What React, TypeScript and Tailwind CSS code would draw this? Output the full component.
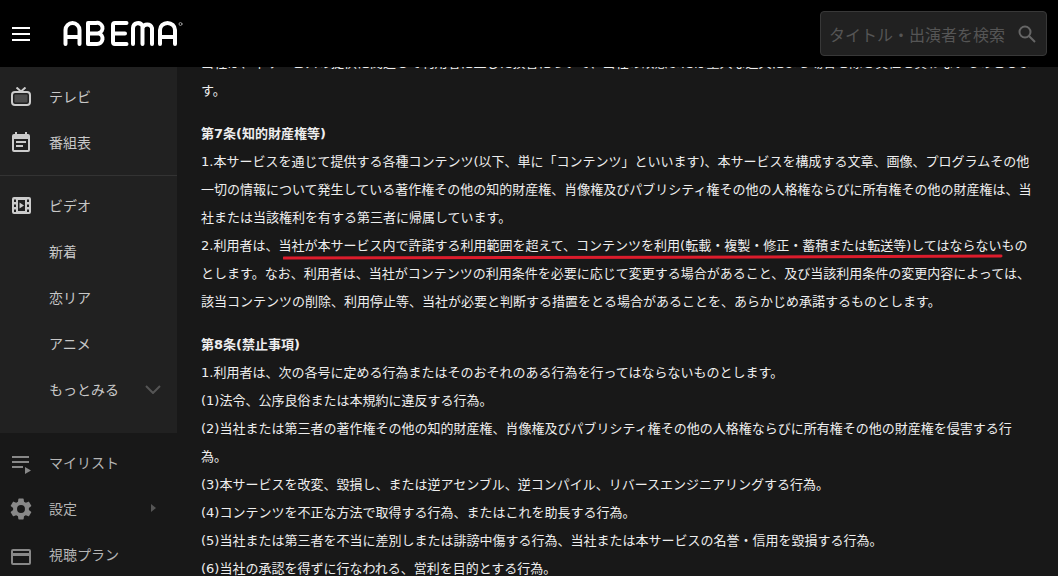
import type { ReactNode } from 'react';

const bodyFont = { fontFamily: '"DejaVu Sans", "Noto Sans CJK JP", sans-serif' };
const uiFont = { fontFamily: '"Noto Sans CJK JP", "Noto Sans", sans-serif' };

function Logo() {
  return (
    <svg width="122" height="28" viewBox="0 0 122 28" fill="none" stroke="#fff" strokeWidth="4" strokeLinecap="round" strokeLinejoin="round" aria-label="ABEMA">
      <path d="M3.500 24V10a7 7 0 0 1 14 0v14M3.500 17h14" />
      <path d="M26 3v21h9a5.500 5.500 0 0 0 1.500-10.800A5 5 0 0 0 34 3h-8M26 13.500h10" />
      <path d="M64.500 3H53a2 2 0 0 0-2 2v17a2 2 0 0 0 2 2h11.500M51 13.500h12" />
      <path d="M71 24V8a5 5 0 0 1 9.500-2v18M80.500 8a5 5 0 0 1 9.500 0v16" />
      <path d="M98 24V10a7.500 7 0 0 1 15 0v14M98 17h15" />
      <circle cx="118.500" cy="4" r="1.500" stroke="#999" strokeWidth="1" />
    </svg>
  );
}

function MenuIcon() {
  return (
    <svg width="18" height="14" viewBox="0 0 18 14" fill="#fff">
      <rect y="0" width="18" height="2" />
      <rect y="6" width="18" height="2" />
      <rect y="12" width="18" height="2" />
    </svg>
  );
}

function TvIcon() {
  return (
    <svg width="20" height="19" viewBox="0 0 20 19" fill="none" stroke="#ccc" strokeWidth="2">
      <path d="M5.500 0.500 10 4.500l4.500-4" />
      <rect x="1" y="5" width="18" height="13" rx="3" />
      <rect x="3.500" y="7.500" width="13" height="8" rx="1" fill="#4d4d4d" stroke="none" />
    </svg>
  );
}

function CalendarIcon() {
  return (
    <svg width="18" height="20" viewBox="0 0 18 20" fill="#ccc">
      <path d="M3 0h2v2h8V0h2v2h1a2 2 0 0 1 2 2v14a2 2 0 0 1-2 2H2a2 2 0 0 1-2-2V4a2 2 0 0 1 2-2h1zM2 7v11h14V7z" />
      <rect x="4" y="9" width="10" height="2" />
      <rect x="4" y="13" width="7" height="2" />
    </svg>
  );
}

function FilmIcon() {
  return (
    <svg width="19" height="17" viewBox="0 0 19 17" fill="#ccc" fillRule="evenodd">
      <path d="M2 0h15a2 2 0 0 1 2 2v13a2 2 0 0 1-2 2H2a2 2 0 0 1-2-2V2a2 2 0 0 1 2-2zM2 2.500v2.500h2V2.500zm0 5v2.500h2V7.500zm0 5v2.500h2v-2.500zm13-10v2.500h2V2.500zm0 5v2.500h2V7.500zm0 5v2.500h2v-2.500zM6 3v11h7V3z" />
      <path d="M7.500 5.500v6l4.500-3z" />
    </svg>
  );
}

function ListIcon() {
  return (
    <svg className="mt-[5px]" width="19" height="18" viewBox="0 0 19 18" fill="#888">
      <rect y="0" width="17" height="2" />
      <rect y="5" width="17" height="2" />
      <rect y="10" width="11" height="2" />
      <path d="M13 11v7l6-3.500z" />
    </svg>
  );
}

function GearIcon() {
  return (
    <svg className="mt-[2px]" width="22" height="22" viewBox="2 2 20 20" fill="#888">
      <path d="M19.140 12.940c.04-.3.060-.61.060-.94 0-.32-.02-.64-.07-.94l2.030-1.580a.49.49 0 0 0 .12-.61l-1.920-3.320a.49.49 0 0 0-.59-.22l-2.390.96c-.5-.38-1.030-.7-1.620-.94l-.36-2.540a.48.48 0 0 0-.48-.41h-3.840a.47.47 0 0 0-.47.41l-.36 2.540c-.59.24-1.130.57-1.620.94l-2.390-.96a.48.48 0 0 0-.59.22L2.740 8.870a.47.47 0 0 0 .12.61l2.030 1.580c-.05.3-.09.63-.09.94s.02.640.07.940l-2.030 1.580a.49.49 0 0 0-.12.61l1.920 3.320c.12.22.37.29.59.22l2.390-.96c.5.380 1.030.7 1.620.94l.36 2.540c.05.24.24.41.48.41h3.840c.24 0 .44-.17.47-.41l.36-2.540c.59-.24 1.130-.56 1.620-.94l2.390.96c.22.080.47 0 .59-.22l1.920-3.320a.47.47 0 0 0-.12-.61zM12 15.600A3.600 3.600 0 1 1 12 8.400a3.600 3.600 0 0 1 0 7.200z" />
    </svg>
  );
}

function CardIcon() {
  return (
    <svg className="mt-[5px]" width="20" height="16" viewBox="0 0 20 16" fill="#888">
      <path d="M2 0h16a2 2 0 0 1 2 2v12a2 2 0 0 1-2 2H2a2 2 0 0 1-2-2V2a2 2 0 0 1 2-2zm0 2v2h16V2zm0 5v7h16V7z" />
    </svg>
  );
}

function SearchIcon() {
  return (
    <svg width="18" height="18" viewBox="0 0 18 18" fill="none" stroke="#666" strokeWidth="2">
      <circle cx="7" cy="7" r="5.500" />
      <path d="M11 11l6 6" />
    </svg>
  );
}

function NavItem({ icon, label, right, dim }: { icon?: ReactNode; label: string; right?: ReactNode; dim?: boolean }) {
  return (
    <div className={`flex h-[46px] shrink-0 items-center text-sm ${dim ? 'text-[#b5b5b5]' : 'text-[#c8c8c8]'}`}>
      <div className="flex w-[49px] shrink-0 items-center justify-center pr-[7px]">{icon}</div>
      <span>{label}</span>
      {right}
    </div>
  );
}

function Sidebar() {
  return (
    <aside className="flex w-[177px] shrink-0 flex-col overflow-hidden bg-[#181818]" style={uiFont}>
      <div className="h-[366px] shrink-0 bg-[#212121] pt-[6px]">
        <NavItem icon={<TvIcon />} label="テレビ" />
        <NavItem icon={<CalendarIcon />} label="番組表" />
        <div className="mt-[10px] mb-[6px] h-px bg-[#333]" />
        <NavItem icon={<FilmIcon />} label="ビデオ" />
        <NavItem label="新着" />
        <NavItem label="恋リア" />
        <NavItem label="アニメ" />
        <NavItem
          label="もっとみる"
          right={
            <svg className="ml-auto mr-[16px]" width="16" height="9" viewBox="0 0 16 9" fill="none" stroke="#555" strokeWidth="2">
              <path d="M1 1l7 7 7-7" />
            </svg>
          }
        />
      </div>
      <div className="shrink-0 pt-[6px]">
        <NavItem dim icon={<ListIcon />} label="マイリスト" />
        <NavItem
          dim
          icon={<GearIcon />}
          label="設定"
          right={
            <svg className="ml-auto mr-[21px]" width="5" height="8" viewBox="0 0 5 8" fill="#555">
              <path d="M0 0l5 4-5 4z" />
            </svg>
          }
        />
        <NavItem dim icon={<CardIcon />} label="視聴プラン" />
      </div>
    </aside>
  );
}

function Article() {
  return (
    <div className="relative -mt-[18px] w-[860px] pl-[24px] text-[13px] leading-[28px] text-[#eee]" style={bodyFont}>
      <p className="mb-[15px]">
        当社は、本サービスの提供に関連して利用者に生じた損害について、当社の故意または重大な過失による場合を除き責任を負わないものとしま
        <br />
        す。
      </p>
      <p className="font-bold">第7条(知的財産権等)</p>
      <p className="mb-[15px]">
        1.本サービスを通じて提供する各種コンテンツ(以下、単に「コンテンツ」といいます)、本サービスを構成する文章、画像、プログラムその他
        <br />
        一切の情報について発生している著作権その他の知的財産権、肖像権及びパブリシティ権その他の人格権ならびに所有権その他の財産権は、当
        <br />
        社または当該権利を有する第三者に帰属しています。
        <br />
        2.利用者は、当社が本サービス内で許諾する利用範囲を超えて、コンテンツを利用(転載・複製・修正・蓄積または転送等)してはならないもの
        <br />
        とします。なお、利用者は、当社がコンテンツの利用条件を必要に応じて変更する場合があること、及び当該利用条件の変更内容によっては、
        <br />
        該当コンテンツの削除、利用停止等、当社が必要と判断する措置をとる場合があることを、あらかじめ承諾するものとします。
      </p>
      <p className="font-bold">第8条(禁止事項)</p>
      <p>
        1.利用者は、次の各号に定める行為またはそのおそれのある行為を行ってはならないものとします。
        <br />
        (1)法令、公序良俗または本規約に違反する行為。
        <br />
        (2)当社または第三者の著作権その他の知的財産権、肖像権及びパブリシティ権その他の人格権ならびに所有権その他の財産権を侵害する行
        <br />
        為。
        <br />
        (3)本サービスを改変、毀損し、または逆アセンブル、逆コンパイル、リバースエンジニアリングする行為。
        <br />
        (4)コンテンツを不正な方法で取得する行為、またはこれを助長する行為。
        <br />
        (5)当社または第三者を不当に差別しまたは誹謗中傷する行為、当社または本サービスの名誉・信用を毀損する行為。
        <br />
        (6)当社の承認を得ずに行なわれる、営利を目的とする行為。
      </p>
      {/* hand drawn red underline on the screenshot */}
      <svg className="absolute left-[106px] top-[205px]" width="722" height="6" viewBox="0 0 722 6" fill="none">
        <path d="M1 4 C200 4 500 3 718 2" stroke="#dc1c2c" strokeWidth="3" strokeLinecap="round" />
      </svg>
    </div>
  );
}

export default function App() {
  return (
    <div className="flex h-[576px] w-[1058px] flex-col overflow-hidden bg-[#181818]" style={uiFont}>
      <header className="relative z-10 flex h-[67px] shrink-0 items-center bg-black">
        <div className="ml-[12px]"><MenuIcon /></div>
        <div className="ml-[32px]"><Logo /></div>
        <div className="ml-auto mr-[11px] flex h-[45px] w-[227px] items-center justify-between rounded border border-[#383838] bg-[#212121] pl-[8px] pr-[10px] text-base text-[#555]">
          <span>タイトル・出演者を検索</span>
          <SearchIcon />
        </div>
      </header>
      <div className="flex min-h-0 flex-1">
        <Sidebar />
        <main className="min-w-0 flex-1 overflow-hidden">
          <Article />
        </main>
      </div>
    </div>
  );
}
